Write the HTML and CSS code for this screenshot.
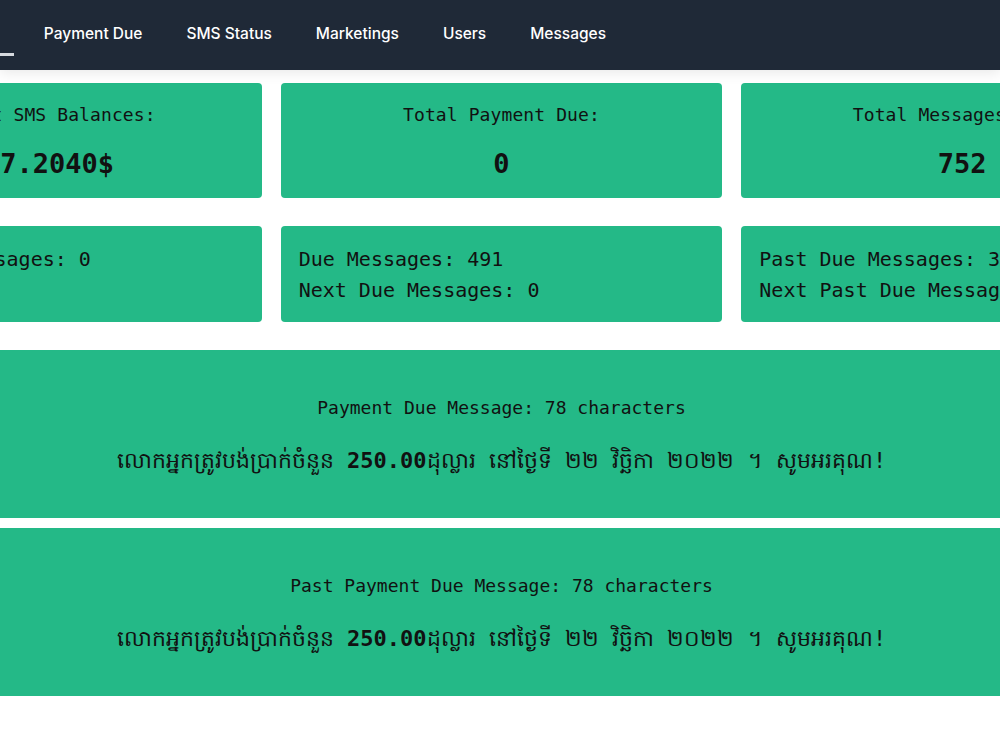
FILE: index.html
```html
<!DOCTYPE html>
<html lang="en">
<head>
<meta charset="utf-8">
<title>SMS Dashboard</title>
<link rel="stylesheet" href="styles.css">
</head>
<body>
<header class="topbar">
  <nav class="nav">
    <a class="nav-link active" href="#">Dashboard</a>
    <a class="nav-link" href="#">Payment Due</a>
    <a class="nav-link" href="#">SMS Status</a>
    <a class="nav-link" href="#">Marketings</a>
    <a class="nav-link" href="#">Users</a>
    <a class="nav-link" href="#">Messages</a>
  </nav>
</header>
<main class="content">
  <section class="stats">
    <div class="card stat">
      <div class="stat-label">Current SMS Balances:</div>
      <div class="stat-value">117.2040$</div>
    </div>
    <div class="card stat">
      <div class="stat-label">Total Payment Due:</div>
      <div class="stat-value">0</div>
    </div>
    <div class="card stat">
      <div class="stat-label">Total Messages Sent:</div>
      <div class="stat-value">752</div>
    </div>
  </section>
  <section class="stats">
    <div class="card detail">
      <div>Scheduled Messages: 0</div>
      <div>&nbsp;</div>
    </div>
    <div class="card detail">
      <div>Due Messages: 491</div>
      <div>Next Due Messages: 0</div>
    </div>
    <div class="card detail">
      <div>Past Due Messages: 304</div>
      <div>Next Past Due Messages: 0</div>
    </div>
  </section>
  <section class="card message first">
    <div class="msg-label">Payment Due Message: 78 characters</div>
    <div class="msg-text">លោកអ្នកត្រូវបង់ប្រាក់ចំនួន <b>250.00</b>ដុល្លារ នៅថ្ងៃទី ២២ វិច្ឆិកា ២០២២ ។ សូមអរគុណ!</div>
  </section>
  <section class="card message">
    <div class="msg-label">Past Payment Due Message: 78 characters</div>
    <div class="msg-text">លោកអ្នកត្រូវបង់ប្រាក់ចំនួន <b>250.00</b>ដុល្លារ នៅថ្ងៃទី ២២ វិច្ឆិកា ២០២២ ។ សូមអរគុណ!</div>
  </section>
</main>
</body>
</html>
```
FILE: styles.css
```css
html, body {
  margin: 0;
  padding: 0;
  overflow: hidden;
  background: #ffffff;
}

body {
  width: 1000px;
  height: 750px;
  font-family: "DejaVu Sans Mono", "Liberation Mono", "Noto Sans", monospace;
  color: #111111;
}

.topbar {
  position: relative;
  z-index: 1;
  height: 70px;
  background: #1f2937;
  box-shadow: 0 3px 12px rgba(0, 0, 0, 0.09);
}

.nav {
  display: flex;
  height: 70px;
  margin-left: -103px;
}

.nav-link {
  position: relative;
  display: flex;
  align-items: center;
  padding: 0 22px 4px;
  color: #ffffff;
  text-decoration: none;
  font-family: Inter, "Noto Sans", sans-serif;
  font-size: 15.5px;
  font-weight: 500;
  white-space: nowrap;
}

.nav-link.active::after {
  content: "";
  position: absolute;
  left: 9px;
  right: 8px;
  top: 53px;
  height: 3px;
  background: #d6d9de;
}

.content {
  width: 1363px;
  margin-left: -180px;
  padding-top: 13px;
}

.stats {
  display: grid;
  grid-template-columns: repeat(3, 1fr);
  column-gap: 19px;
  margin-bottom: 28px;
}

.card {
  background: #24b987;
  border-radius: 4px;
}

.stat {
  padding: 20px 18px 16px;
  text-align: center;
}

.stat-label {
  font-size: 18px;
  line-height: 24px;
  letter-spacing: 0.1px;
}

.stat-value {
  margin-top: 19px;
  font-size: 27px;
  line-height: 36px;
  font-weight: bold;
}

.detail {
  padding: 18px 18px 16px;
  font-size: 20px;
  line-height: 31px;
  white-space: nowrap;
  overflow: hidden;
}

.message {
  border-radius: 0;
  padding: 46px 20px 37px;
  text-align: center;
}

.message.first {
  margin-bottom: 10px;
}

.msg-label {
  font-size: 18px;
  line-height: 24px;
}

.msg-text {
  margin-top: 21px;
  font-size: 22px;
  line-height: 40px;
  white-space: nowrap;
}

.msg-text b {
  font-weight: bold;
}
```
